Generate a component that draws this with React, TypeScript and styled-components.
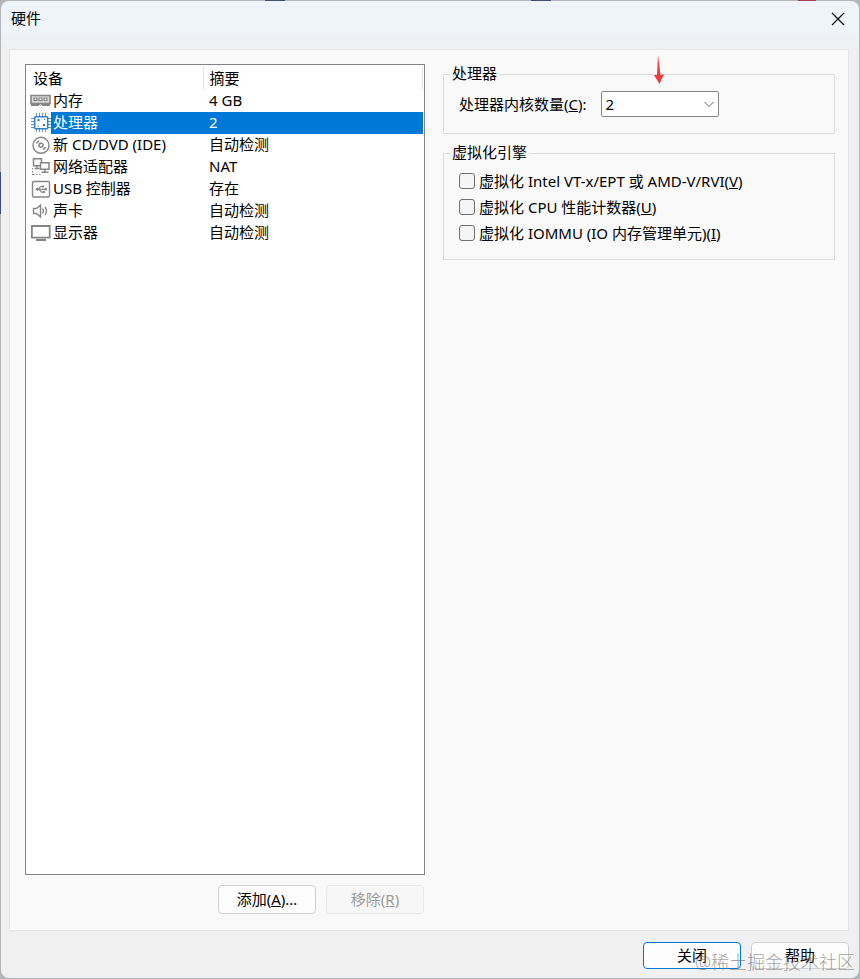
import React, { useState } from "react";
import styled, { createGlobalStyle, css } from "styled-components";

const GlobalStyle = createGlobalStyle`
  *, *::before, *::after { box-sizing: border-box; }
  html, body { margin: 0; padding: 0; }
  body {
    background: #b4b5b9;
    color: #000;
    font-family: "Noto Sans", "Noto Sans CJK SC", sans-serif;
    font-size: 15px;
    line-height: 20px;
  }
  button, select, input { font: inherit; color: inherit; margin: 0; }
`;

const Desktop = styled.div`
  min-height: 100vh;
  display: flex;
  padding: 1px;
  background:
    linear-gradient(#40507c, #40507c) 265px 0 / 20px 1px no-repeat,
    linear-gradient(#40507c, #40507c) 531px 0 / 20px 1px no-repeat,
    linear-gradient(#a83a55, #a83a55) 798px 0 / 18px 1px no-repeat,
    linear-gradient(#3e4c86, #3e4c86) 0 172px / 1px 42px no-repeat,
    #b4b5b9;
`;

const Window = styled.main`
  position: relative;
  flex: 1;
  min-width: 0;
  display: flex;
  flex-direction: column;
  border-radius: 8px;
  overflow: hidden;
  background: linear-gradient(#eef4f9 0, #eef4f9 28px, #f0f0f0 46px);
`;

const TitleBar = styled.header`
  display: flex;
  justify-content: space-between;
  align-items: center;
  height: 36px;
  padding: 0 14px 0 10px;
`;

const Title = styled.h1`
  margin: 0;
  padding-bottom: 2px;
  font-size: 15px;
  font-weight: 400;
`;

const CloseButton = styled.button`
  display: flex;
  padding: 0;
  border: 0;
  background: none;
`;

const Panel = styled.section`
  flex: 1;
  display: flex;
  gap: 18px;
  margin: 12px 10px 0 8px;
  padding: 14px 13px 16px 15px;
  border: 1px solid #e5e5e5;
  background: #f9f9f9;
`;

const DeviceColumn = styled.div`
  flex: 0 1 400px;
  display: flex;
  flex-direction: column;
  gap: 10px;
`;

const SettingsColumn = styled.div`
  flex: 1 1 0;
  min-width: 0;
  display: flex;
  flex-direction: column;
  gap: 9px;
`;

const ListBox = styled.div`
  flex: 1;
  padding: 1px;
  border: 1px solid #828282;
  background: #fff;
`;

const DeviceTable = styled.table`
  width: 100%;
  border-collapse: collapse;
  table-layout: fixed;
`;

const HeadCell = styled.th<{ $width?: string }>`
  width: ${(p) => p.$width ?? "auto"};
  height: 24px;
  padding: 0 0 0 6px;
  border-right: 1px solid #e5e5e5;
  font-weight: 400;
  text-align: left;
`;

const selected = css`
  background: #0078d7;
  color: #fff;
`;

const NameCell = styled.td`
  height: 22px;
  padding: 0 0 0 3px;
`;

const NameContent = styled.div`
  display: flex;
`;

const Name = styled.span<{ $selected: boolean }>`
  flex: 1;
  padding-left: 2px;
  height: 22px;
  white-space: nowrap;
  ${(p) => p.$selected && selected}
`;

const SummaryCell = styled.td<{ $selected: boolean }>`
  height: 22px;
  padding: 0 0 0 6px;
  vertical-align: top;
  ${(p) => p.$selected && selected}
`;

const Icon = styled.svg`
  flex: none;
  width: 21px;
  height: 22px;
  fill: none;
  stroke: #858585;
`;

const ButtonRow = styled.div`
  display: flex;
  justify-content: flex-end;
  gap: 10px;
  padding-right: 1px;
`;

const Footer = styled.footer`
  display: flex;
  justify-content: flex-end;
  gap: 10px;
  padding: 11px 10px 9px;
`;

const Button = styled.button<{ $primary?: boolean; $compact?: boolean }>`
  width: 98px;
  height: ${(p) => (p.$compact ? 27 : 29)}px;
  padding: 0 0 2px;
  border: 1px solid ${(p) => (p.$primary ? "#0078d4" : "#d0d0d0")};
  border-radius: 4px;
  background: #fdfdfd;

  &:disabled {
    border-color: #e8e8e8;
    background: #f7f7f7;
    color: #9a9a9a;
  }
`;

const Group = styled.fieldset<{ $dense?: boolean }>`
  min-width: 0;
  margin: 0;
  padding: ${(p) => (p.$dense ? "5px 14px 13px 15px" : "7px 14px 16px 15px")};
  border: 1px solid #dcdcdc;
`;

const Legend = styled.legend`
  height: 20px;
  margin-left: -9px;
  padding: 0 2px;
  line-height: 18px;
`;

const Field = styled.div`
  display: flex;
  align-items: center;
  gap: 14px;
`;

const SelectBox = styled.div`
  position: relative;
  width: 118px;
`;

const Select = styled.select`
  display: block;
  width: 100%;
  height: 26px;
  padding: 0 24px 1px 4px;
  border: 1px solid #868686;
  border-radius: 2px;
  background: #fff;
  appearance: none;
`;

const Chevron = styled.svg`
  position: absolute;
  right: 4px;
  top: 8px;
  width: 12px;
  height: 10px;
  pointer-events: none;
`;

const Arrow = styled.svg`
  position: absolute;
  left: 52px;
  bottom: 32px;
  width: 12px;
  height: 30px;
  pointer-events: none;
`;

const CheckRow = styled.label`
  display: flex;
  align-items: center;
  gap: 4px;
  height: 26px;
  white-space: nowrap;
`;

const CheckBox = styled.input`
  width: 16px;
  height: 16px;
  border: 1px solid #707070;
  border-radius: 3px;
  background: #f5f5f5;
  appearance: none;

  &:checked {
    background: #0078d4;
  }
`;

const Watermark = styled.div`
  position: absolute;
  right: 4px;
  bottom: 3px;
  color: rgba(110, 110, 110, 0.65);
  font-size: 18px;
  font-weight: 300;
  line-height: 26px;
  pointer-events: none;
`;

type Kind = "memory" | "cpu" | "disc" | "network" | "usb" | "sound" | "display";

const drawings: Record<Kind, React.ReactNode> = {
  memory: (
    <>
      <path d="M1 5.500h19v8H1z" fill="#d8d8d8" strokeWidth="1.600" />
      <path d="M4 8h3v2.500H4zM9 8h3v2.500H9zM14 8h3v2.500h-3z" fill="#fff" strokeWidth="1.200" />
      <path d="M1 15h8M12 15h8" strokeWidth="2" />
      <path d="M9 14l1.500 1.500L12 14" />
    </>
  ),
  cpu: (
    <>
      <path
        d="M6.500 1v3M9.500 1v3M12.500 1v3M15.500 1v3M6.500 17v3M9.500 17v3M12.500 17v3M15.500 17v3M1 6.500h3M1 9.500h3M1 12.500h3M1 15.500h3M18 6.500h3M18 9.500h3M18 12.500h3M18 15.500h3"
        stroke="#7590a8"
      />
      <rect x="4.700" y="4.700" width="13" height="12" rx="1" fill="#fff" stroke="#2f83c9" strokeWidth="1.600" />
      <path d="M7.500 7h2v2h-2zM13 12h2v2h-2z" fill="#2f6fa8" stroke="none" />
      <path d="M14 7h1v1h-1zM7.500 13.500h1v1h-1z" fill="#2f6fa8" stroke="none" />
    </>
  ),
  disc: (
    <>
      <circle cx="11" cy="11.300" r="8" strokeWidth="1.400" />
      <circle cx="11" cy="11.300" r="2" strokeWidth="1.500" />
      <path d="M6.500 9.500A5 5 0 0 1 9 7M15.500 13A5 5 0 0 1 13 15.500" strokeWidth="1.600" />
    </>
  ),
  network: (
    <>
      <path d="M3.500 2.700h8v7h-8z" strokeWidth="1.500" />
      <path d="M7 9.500v3M4.500 12.500h5" strokeWidth="1.400" />
      <path d="M10.500 6.700h8.500v6.500h-8.500z" fill="#fff" strokeWidth="1.500" />
      <path d="M14.800 13.500v2.500M11.500 16.300h7" strokeWidth="1.500" />
      <path d="M2.500 12v7M3 18.500h9" strokeDasharray="1.500 1.500" />
    </>
  ),
  usb: (
    <>
      <rect x="2.500" y="3.500" width="17" height="15.500" rx="1.500" strokeWidth="1.400" />
      <path d="M6 11.300h10M8 11.300l2.500-2.800h2M9 11.300l2.500 2.800h2" strokeWidth="1.200" />
      <path d="M5 11.300l3-2v4zM12 7.500h2v2h-2zM13 13h2v2h-2z" fill="#858585" stroke="none" />
      <circle cx="15.800" cy="11.300" r="1.300" fill="#858585" stroke="none" />
    </>
  ),
  sound: (
    <>
      <path d="M3.500 8.500h3l4-3.500v12l-4-3.500h-3z" strokeWidth="1.400" />
      <path d="M12.500 8.500q2 2.500 0 5M15 7q3 4 0 8" strokeWidth="1.300" />
    </>
  ),
  display: (
    <>
      <path d="M1.900 4h17.800v11.700h-17.800z" strokeWidth="1.800" />
      <path d="M6 18h10" strokeWidth="1.800" />
    </>
  ),
};

const devices: { kind: Kind; name: string; summary: string }[] = [
  { kind: "memory", name: "内存", summary: "4 GB" },
  { kind: "cpu", name: "处理器", summary: "2" },
  { kind: "disc", name: "新 CD/DVD (IDE)", summary: "自动检测" },
  { kind: "network", name: "网络适配器", summary: "NAT" },
  { kind: "usb", name: "USB 控制器", summary: "存在" },
  { kind: "sound", name: "声卡", summary: "自动检测" },
  { kind: "display", name: "显示器", summary: "自动检测" },
];

const engineOptions = [
  { id: "vtx", label: "虚拟化 Intel VT-x/EPT 或 AMD-V/RVI", accessKey: "V" },
  { id: "counters", label: "虚拟化 CPU 性能计数器", accessKey: "U" },
  { id: "iommu", label: "虚拟化 IOMMU (IO 内存管理单元)", accessKey: "I" },
];

export default function App() {
  const [active, setActive] = useState<Kind>("cpu");
  const [cores, setCores] = useState("2");

  return (
    <>
      <GlobalStyle />
      <Desktop>
        <Window>
          <TitleBar>
            <Title>硬件</Title>
            <CloseButton type="button" aria-label="关闭窗口">
              <svg width="14" height="14" viewBox="0 0 14 14" stroke="#111" strokeWidth="1.300">
                <path d="M1 1l12 12M13 1L1 13" />
              </svg>
            </CloseButton>
          </TitleBar>

          <Panel>
            <DeviceColumn>
              <ListBox>
                <DeviceTable>
                  <thead>
                    <tr>
                      <HeadCell scope="col" $width="176px">设备</HeadCell>
                      <HeadCell scope="col">摘要</HeadCell>
                    </tr>
                  </thead>
                  <tbody>
                    {devices.map((d) => (
                      <tr key={d.kind} onClick={() => setActive(d.kind)} aria-selected={d.kind === active}>
                        <NameCell>
                          <NameContent>
                            <Icon viewBox="0 0 21 22" aria-hidden="true">{drawings[d.kind]}</Icon>
                            <Name $selected={d.kind === active}>{d.name}</Name>
                          </NameContent>
                        </NameCell>
                        <SummaryCell $selected={d.kind === active}>{d.summary}</SummaryCell>
                      </tr>
                    ))}
                  </tbody>
                </DeviceTable>
              </ListBox>
              <ButtonRow>
                <Button type="button">添加(<u>A</u>)...</Button>
                <Button type="button" disabled>移除(<u>R</u>)</Button>
              </ButtonRow>
            </DeviceColumn>

            <SettingsColumn>
              <Group>
                <Legend>处理器</Legend>
                <Field>
                  <label htmlFor="cores">处理器内核数量(<u>C</u>):</label>
                  <SelectBox>
                    <Select id="cores" value={cores} onChange={(e) => setCores(e.target.value)}>
                      {["1", "2", "4", "8"].map((n) => (
                        <option key={n}>{n}</option>
                      ))}
                    </Select>
                    <Chevron viewBox="0 0 12 10" fill="none" stroke="#606060" aria-hidden="true">
                      <path d="M1.500 3l4.500 4.500L10.500 3" />
                    </Chevron>
                    <Arrow viewBox="0 0 12 30" fill="#ef3b36" aria-hidden="true">
                      <path d="M5 0L7.500 20L11 19L6.500 29L1 20L4 20Z" />
                    </Arrow>
                  </SelectBox>
                </Field>
              </Group>
              <Group $dense>
                <Legend>虚拟化引擎</Legend>
                {engineOptions.map((o) => (
                  <CheckRow key={o.id}>
                    <CheckBox type="checkbox" />
                    <span>{o.label}(<u>{o.accessKey}</u>)</span>
                  </CheckRow>
                ))}
              </Group>
            </SettingsColumn>
          </Panel>

          <Footer>
            <Button type="button" $primary $compact>关闭</Button>
            <Button type="button" $compact>帮助</Button>
          </Footer>
          <Watermark>@稀土掘金技术社区</Watermark>
        </Window>
      </Desktop>
    </>
  );
}
